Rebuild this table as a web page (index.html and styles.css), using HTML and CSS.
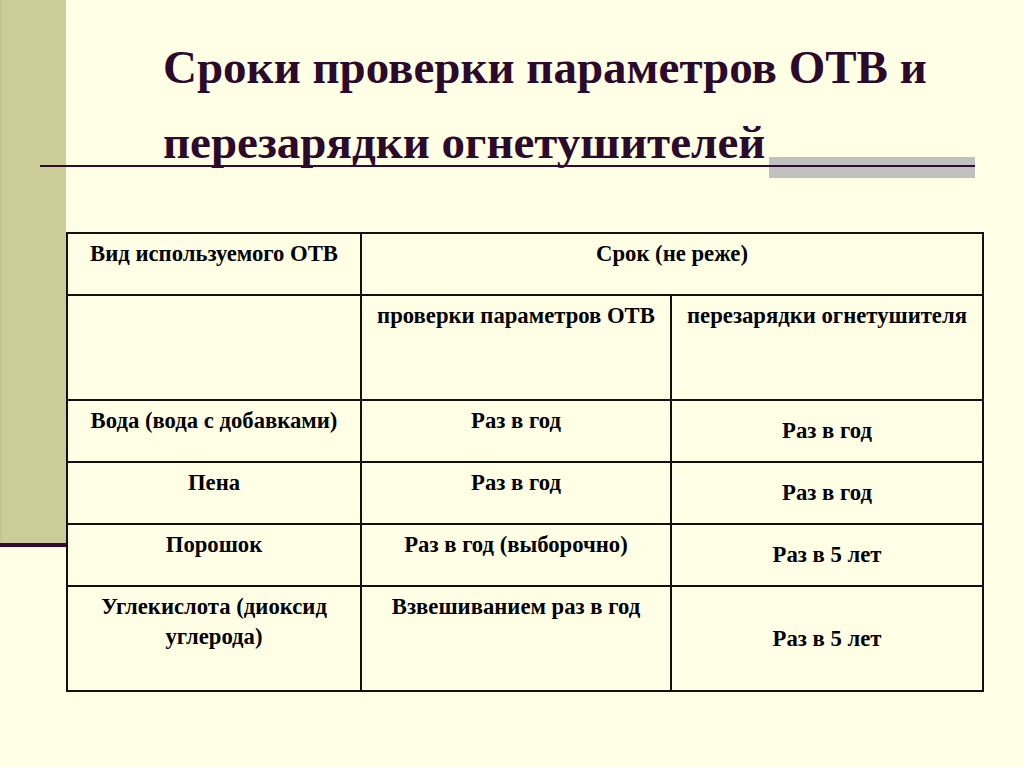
FILE: index.html
```html
<!DOCTYPE html>
<html lang="ru">
<head>
<meta charset="utf-8">
<link rel="stylesheet" href="styles.css">
</head>
<body>
<div class="slide">
  <div class="sidebar"></div>
  <div class="side-rule"></div>
  <div class="content">
    <h1 class="title">Сроки проверки параметров ОТВ и<br>перезарядки огнетушителей</h1>
    <div class="title-rule"><div class="dark-line"></div><div class="gray-bar"></div></div>
    <table class="grid">
      <colgroup><col class="c1"><col class="c2"><col class="c3"></colgroup>
      <tr class="r-head">
        <td>Вид используемого ОТВ</td>
        <td colspan="2">Срок (не реже)</td>
      </tr>
      <tr class="r-sub">
        <td></td>
        <td>проверки параметров ОТВ</td>
        <td>перезарядки огнетушителя</td>
      </tr>
      <tr class="r-data">
        <td>Вода (вода с добавками)</td>
        <td>Раз в год</td>
        <td class="mid">Раз в год</td>
      </tr>
      <tr class="r-data">
        <td>Пена</td>
        <td>Раз в год</td>
        <td class="mid">Раз в год</td>
      </tr>
      <tr class="r-data">
        <td>Порошок</td>
        <td>Раз в год (выборочно)</td>
        <td class="mid">Раз в 5 лет</td>
      </tr>
      <tr class="r-last">
        <td>Углекислота (диоксид углерода)</td>
        <td>Взвешиванием раз в год</td>
        <td class="mid">Раз в 5 лет</td>
      </tr>
    </table>
  </div>
</div>
</body>
</html>
```

FILE: styles.css
```css
html, body {
  margin: 0;
  padding: 0;
}
body {
  width: 1024px;
  height: 767px;
  overflow: hidden;
  background: #ffffe6;
  font-family: "Liberation Serif", "Times New Roman", serif;
}
.slide {
  position: relative;
  width: 1024px;
  height: 767px;
  background: #ffffe6;
}
.sidebar {
  position: absolute;
  left: 0;
  top: 0;
  width: 66px;
  height: 544px;
  background: #cccc99;
  border-left: 2px solid #c4c490;
  box-sizing: border-box;
}
.side-rule {
  position: absolute;
  left: 0;
  top: 543px;
  width: 66px;
  height: 4px;
  background: #330a33;
}
.content {
  position: relative;
  padding-top: 30px;
}
.title {
  margin: 0 0 0 163px;
  font-size: 47px;
  line-height: 75px;
  font-weight: bold;
  color: #2b0a2b;
}
.title-rule {
  position: relative;
  margin: -15px 0 0 40px;
  width: 935px;
  height: 2px;
}
.dark-line {
  position: absolute;
  left: 0;
  top: 0;
  width: 729px;
  height: 2px;
  background: #330a33;
}
.gray-bar {
  position: absolute;
  left: 729px;
  top: -8px;
  width: 206px;
  height: 21px;
  background: linear-gradient(to bottom, #c0c0c0 0, #c0c0c0 8px, #330a33 8px, #330a33 10px, #c0c0c0 10px, #c0c0c0 21px);
}
.grid {
  margin: 65px 0 0 66px;
  width: 916px;
  border-collapse: collapse;
  table-layout: fixed;
  font-size: 22.7px;
  font-weight: bold;
  color: #000;
}
.c1 { width: 294px; }
.c2 { width: 310px; }
.c3 { width: 312px; }
.grid td {
  border: 2px solid #111;
  text-align: center;
  vertical-align: top;
  padding: 5px 8px 0;
  line-height: 30px;
  box-sizing: border-box;
}
.grid td.mid {
  vertical-align: middle;
  padding-top: 0;
}
.r-head td { height: 62px; }
.r-sub td { height: 105px; }
.r-data td { height: 62px; }
.r-last td { height: 105px; }
```
